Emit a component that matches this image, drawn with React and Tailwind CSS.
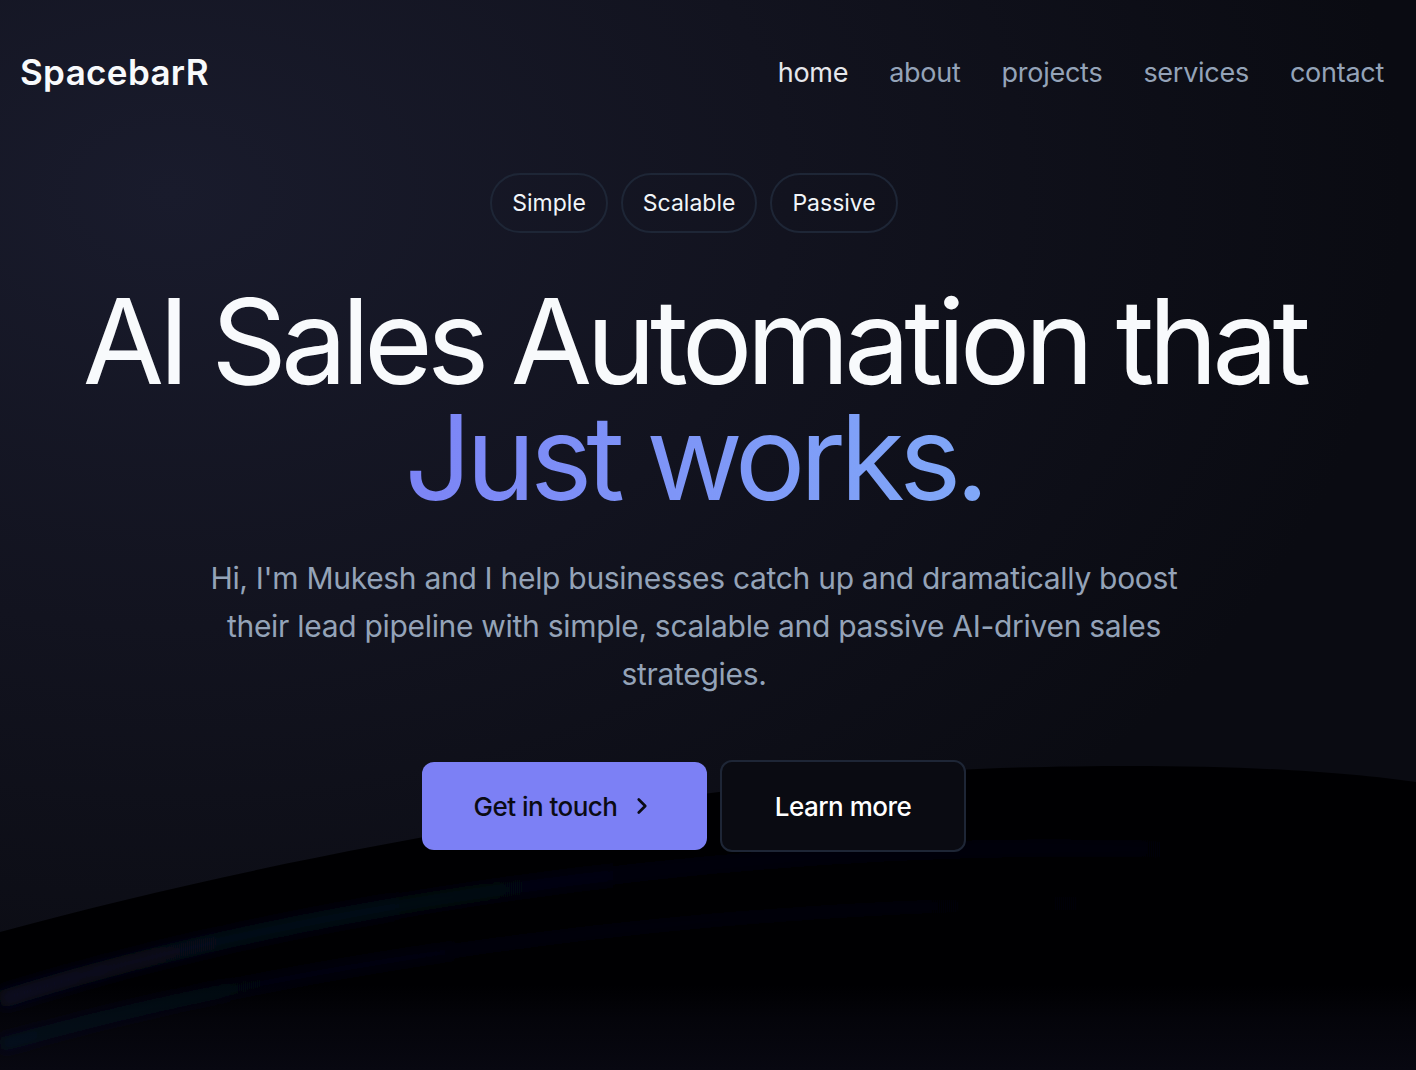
import { ChevronRight } from "lucide-react";

const links = ["home", "about", "projects", "services", "contact"];
const tags = ["Simple", "Scalable", "Passive"];

function Waves() {
  return (
    <svg
      className="pointer-events-none absolute inset-0 h-full w-full"
      viewBox="0 0 1416 1070"
      preserveAspectRatio="none"
    >
      <defs>
        <linearGradient id="band" x1="0" y1="0.72" x2="0" y2="1">
          <stop offset="0" stopColor="#000002" />
          <stop offset="0.4" stopColor="#04040a" />
          <stop offset="1" stopColor="#080811" />
        </linearGradient>
        <linearGradient id="streak" x1="0" y1="0" x2="1" y2="0">
          <stop offset="0" stopColor="#0b1230" stopOpacity="0.7" />
          <stop offset="0.5" stopColor="#0a0c1c" stopOpacity="0.4" />
          <stop offset="1" stopColor="#0a0a14" stopOpacity="0.15" />
        </linearGradient>
        <filter
          id="soft"
          filterUnits="userSpaceOnUse"
          x="-50"
          y="700"
          width="1516"
          height="420"
        >
          <feGaussianBlur stdDeviation="6" />
        </filter>
      </defs>
      <path
        d="M0 932 C 300 850, 700 780, 1000 768 C 1200 762, 1330 770, 1416 782 L1416 1070 L0 1070 Z"
        fill="url(#band)"
      />
      <g filter="url(#soft)">
        <path
          d="M0 1000 C 300 905, 700 850, 1050 848 C 1250 848, 1350 858, 1416 868"
          fill="none"
          stroke="url(#streak)"
          strokeWidth="18"
        />
        <path
          d="M0 1045 C 320 955, 720 905, 1080 903 C 1260 903, 1360 913, 1416 923"
          fill="none"
          stroke="url(#streak)"
          strokeWidth="14"
          opacity="0.7"
        />
      </g>
    </svg>
  );
}

export default function App() {
  return (
    <div
      className="relative h-[1070px] w-full overflow-hidden bg-[#0a0b12] bg-[radial-gradient(ellipse_at_12%_18%,#191b2c_0%,#12131f_35%,#0a0b12_70%)] text-white"
      style={{ fontFamily: "Inter, 'Noto Sans', sans-serif" }}
    >
      <Waves />

      <div className="relative">
        {/* Header */}
        <header className="flex items-center justify-between pl-5 pr-8 pt-[55px]">
          <div className="text-[35px] font-semibold leading-none tracking-[0.01em] text-[#f8fafc]">
            SpacebarR
          </div>
          <nav className="flex items-center gap-[41px] text-[27px] leading-none tracking-[-0.01em]">
            {links.map((l, i) => (
              <a
                key={l}
                href="#"
                className={i === 0 ? "text-[#e5e7eb]" : "text-[#94a3b8]"}
              >
                {l}
              </a>
            ))}
          </nav>
        </header>

        {/* Hero */}
        <section className="flex flex-col items-center pr-[28px] pt-[83px] text-center">
          <div className="flex gap-[13px]">
            {tags.map((t) => (
              <span
                key={t}
                className="flex h-[60px] items-center rounded-full border-2 border-[#1e2636] px-5 text-[23px] text-[#f1f5f9]"
              >
                {t}
              </span>
            ))}
          </div>

          <h1 className="mt-[50px] flex flex-col items-center text-[118px] font-normal leading-[116px] tracking-[-0.05em] text-[#f8fafc]">
            <span>AI Sales Automation that</span>
            <span className="bg-gradient-to-r from-[#7c84f6] to-[#80a8f8] bg-clip-text text-transparent">
              Just works.
            </span>
          </h1>

          <p className="mt-[39px] max-w-[990px] text-[30px] leading-[48px] tracking-[-0.01em] text-[#94a3b8]">
            Hi, I'm Mukesh and I help businesses catch up and dramatically boost
            their lead pipeline with simple, scalable and passive AI-driven sales
            strategies.
          </p>

          <div className="mt-[62px] flex items-center gap-[13px]">
            <button className="flex h-[88px] w-[285px] items-center justify-center gap-3 rounded-xl bg-[#7c80f5] text-[26px] font-medium tracking-[-0.02em] text-[#0b0b14]">
              Get in touch
              <ChevronRight size={26} strokeWidth={2.5} />
            </button>
            <button className="flex h-[92px] w-[246px] items-center justify-center rounded-xl border-2 border-[#1e2636] bg-[#0a0b12] text-[26px] font-medium tracking-[-0.02em] text-white">
              Learn more
            </button>
          </div>
        </section>
      </div>
    </div>
  );
}
